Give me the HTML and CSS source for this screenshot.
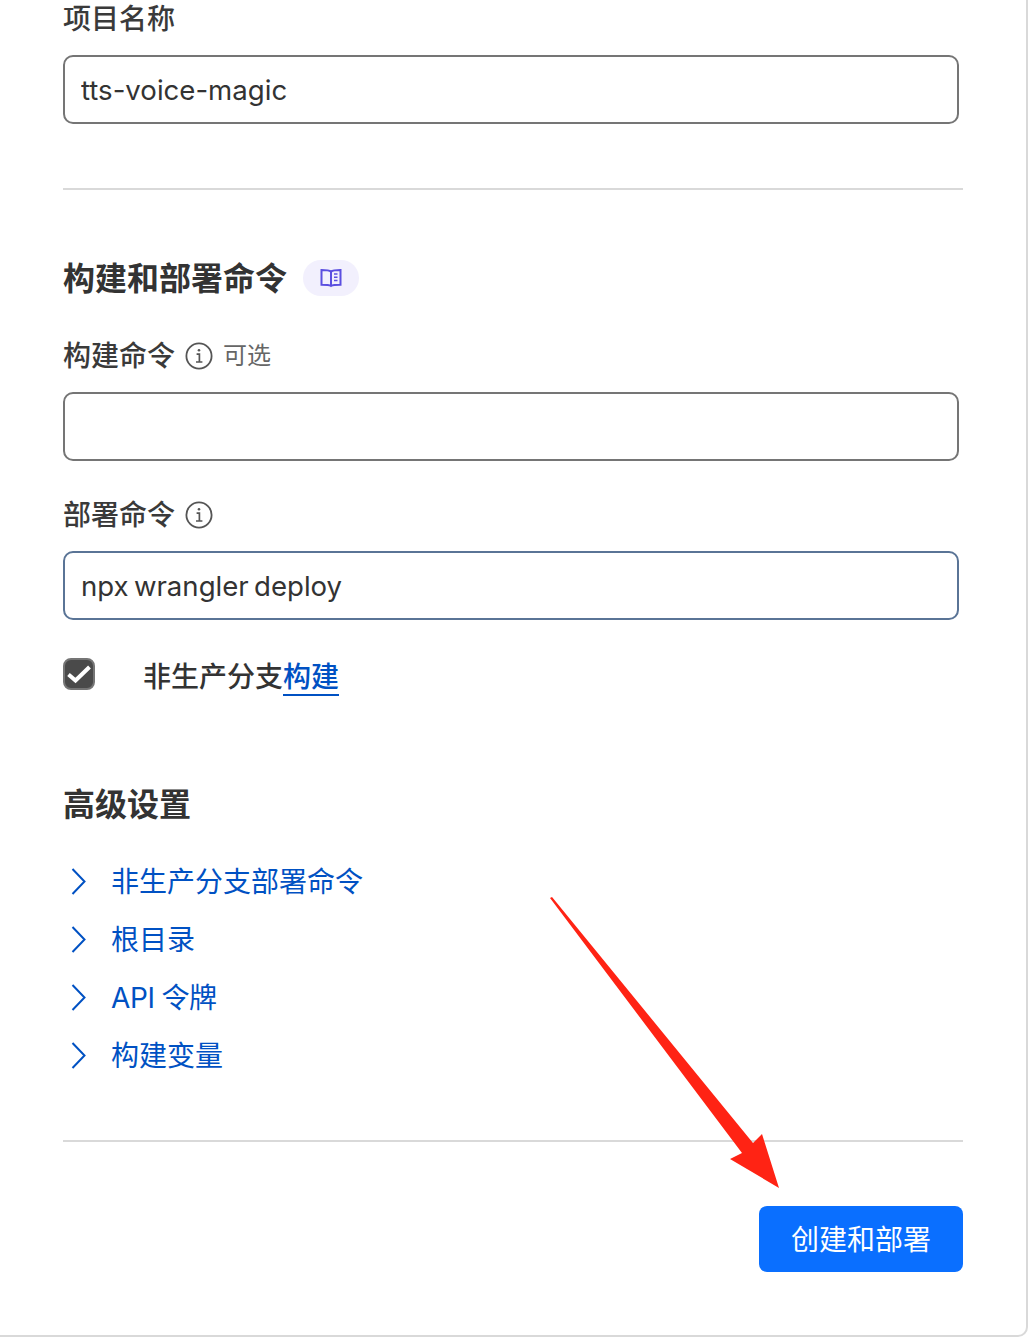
FILE: index.html
```html
<!DOCTYPE html>
<html lang="zh">
<head>
<meta charset="utf-8">
<title>创建和部署</title>
<link rel="stylesheet" href="styles.css">
</head>
<body>
<main class="card">
  <div class="field first">
    <div class="label-row"><span class="label">项目名称</span></div>
    <input class="input" type="text" value="tts-voice-magic">
  </div>
  <hr class="rule rule-top">
  <div class="heading-row">
    <h2 class="heading">构建和部署命令</h2>
    <span class="doc-pill">
      <svg width="22" height="20" viewBox="0 0 22 20" fill="none" stroke="#5b4fe0" stroke-width="2"><path d="M11 3.6C9.5 2.4 7 2 1.5 2V16.8C6 16.8 9 16.8 11 18C13 16.8 16 16.8 20.5 16.8V2C15 2 12.5 2.4 11 3.6Z"/><path d="M11 3.6V18"/><path d="M14 6H17.5M14 9.3H17.5M14 12.6H17.5" stroke-width="1.5"/></svg>
    </span>
  </div>
  <div class="field build">
    <div class="label-row">
      <span class="label">构建命令</span>
      <svg class="info" width="28" height="28" viewBox="0 0 28 28" fill="none" stroke="#555"><circle cx="14" cy="14" r="12.6" stroke-width="1.8"/><path d="M11.6 12.2H14.4V20M11 20H17.4" stroke-width="1.7"/><circle cx="14" cy="8.2" r="1.3" fill="#555" stroke="none"/></svg>
      <span class="optional">可选</span>
    </div>
    <input class="input" type="text" value="">
  </div>
  <div class="field deploy">
    <div class="label-row">
      <span class="label">部署命令</span>
      <svg class="info" width="28" height="28" viewBox="0 0 28 28" fill="none" stroke="#555"><circle cx="14" cy="14" r="12.6" stroke-width="1.8"/><path d="M11.6 12.2H14.4V20M11 20H17.4" stroke-width="1.7"/><circle cx="14" cy="8.2" r="1.3" fill="#555" stroke="none"/></svg>
    </div>
    <input class="input input-active" type="text" value="npx wrangler deploy">
  </div>
  <div class="check-row">
    <span class="checkbox">
      <svg width="26" height="20" viewBox="0 0 26 20" fill="none" stroke="#fff" stroke-width="4"><path d="M2.5 10.5L9.5 16.5L23.5 3"/></svg>
    </span>
    <span class="check-text">非生产分支<a class="link" href="#">构建</a></span>
  </div>
  <h2 class="heading advanced">高级设置</h2>
  <ul class="accordion">
    <li class="acc-item"><svg width="16" height="28" viewBox="0 0 16 28" fill="none" stroke="#0051c3" stroke-width="2"><path d="M1.5 1L13.5 13.5L1.5 26"/></svg><span>非生产分支部署命令</span></li>
    <li class="acc-item"><svg width="16" height="28" viewBox="0 0 16 28" fill="none" stroke="#0051c3" stroke-width="2"><path d="M1.5 1L13.5 13.5L1.5 26"/></svg><span>根目录</span></li>
    <li class="acc-item"><svg width="16" height="28" viewBox="0 0 16 28" fill="none" stroke="#0051c3" stroke-width="2"><path d="M1.5 1L13.5 13.5L1.5 26"/></svg><span class="tight">API 令牌</span></li>
    <li class="acc-item"><svg width="16" height="28" viewBox="0 0 16 28" fill="none" stroke="#0051c3" stroke-width="2"><path d="M1.5 1L13.5 13.5L1.5 26"/></svg><span>构建变量</span></li>
  </ul>
  <hr class="rule rule-bottom">
  <div class="actions"><button class="primary" type="button">创建和部署</button></div>
</main>
<svg class="annotation" width="240" height="300" viewBox="0 0 240 300"><path fill="#ff2314" d="M0 1L2 0L203 246L212 237L229 291L180 262L192 256Z"/></svg>
</body>
</html>
```
FILE: styles.css
```css
* { box-sizing: border-box; }
html, body { margin: 0; padding: 0; }
body {
  width: 1028px;
  height: 1340px;
  background: #fff;
  overflow: hidden;
  position: relative;
  font-family: "Inter", "Noto Sans CJK SC", sans-serif;
  color: #333;
}
.card {
  width: 1028px;
  height: 1337px;
  padding: 0 65px 0 63px;
  border-right: 2px solid #d9d9d9;
  border-bottom: 2px solid #d9d9d9;
  border-bottom-right-radius: 10px;
}
.label-row { display: flex; align-items: center; height: 36px; }
.label { font-size: 28px; font-weight: 500; line-height: 36px; color: #3a3a3a; }
.field.first { padding-top: 1px; }
.field.first .label-row { margin-bottom: 18px; }
.input {
  display: block;
  width: 896px;
  height: 69px;
  padding: 0 16px;
  border: 2px solid #757575;
  border-radius: 10px;
  font: 400 27.6px "Inter", "Noto Sans CJK SC", sans-serif;
  word-spacing: -2.5px;
  color: #333;
  background: #fff;
  outline: none;
}
.input-active { border-color: #5a7496; }
.rule { display: block; width: 900px; margin: 0; border: 0; border-top: 2px solid #d9d9d9; }
.rule-top { margin-top: 64px; }
.heading-row { display: flex; align-items: center; gap: 16px; margin-top: 65px; height: 48px; }
.heading { margin: 0; font-size: 32px; font-weight: 600; line-height: 48px; color: #333; }
.doc-pill {
  width: 56px;
  height: 36px;
  margin-bottom: 2px;
  border-radius: 18px;
  background: #f2f0fd;
  display: flex;
  align-items: center;
  justify-content: center;
}
.field.build { margin-top: 35px; }
.field.build .label-row, .field.deploy .label-row { margin-bottom: 18px; }
.field.deploy { margin-top: 36px; }
.info { margin-left: 10px; }
.optional { margin-left: 10px; font-size: 24px; color: #666; line-height: 36px; }
.check-row { display: flex; align-items: center; margin-top: 34px; height: 40px; }
.checkbox {
  width: 32px;
  height: 32px;
  border-radius: 8px;
  border: 2px solid #757575;
  background: #4a4a4a;
  display: flex;
  align-items: center;
  justify-content: center;
}
.check-text { margin-left: 48px; padding-top: 6px; font-size: 28px; font-weight: 500; line-height: 40px; color: #333; }
.link { color: #0051c3; text-decoration: none; border-bottom: 2px solid #0051c3; display: inline-block; line-height: 34px; }
.heading.advanced { margin-top: 87px; }
.accordion { list-style: none; margin: 33px 0 0; padding: 0; display: flex; flex-direction: column; gap: 18px; }
.acc-item { display: flex; align-items: center; height: 40px; padding-left: 8px; color: #0051c3; font-size: 28px; line-height: 40px; }
.acc-item span { margin-left: 24px; }
.acc-item .tight { word-spacing: -1px; letter-spacing: -0.3px; }
.rule-bottom { margin-top: 64px; }
.actions { display: flex; justify-content: flex-end; width: 900px; margin-top: 64px; }
.primary {
  width: 204px;
  height: 66px;
  padding: 0 0 2px;
  border: 0;
  border-radius: 8px;
  background: #0a6fff;
  color: #fff;
  font: 400 28px "Inter", "Noto Sans CJK SC", sans-serif;
}
.annotation { position: absolute; left: 550px; top: 897px; pointer-events: none; }
```
